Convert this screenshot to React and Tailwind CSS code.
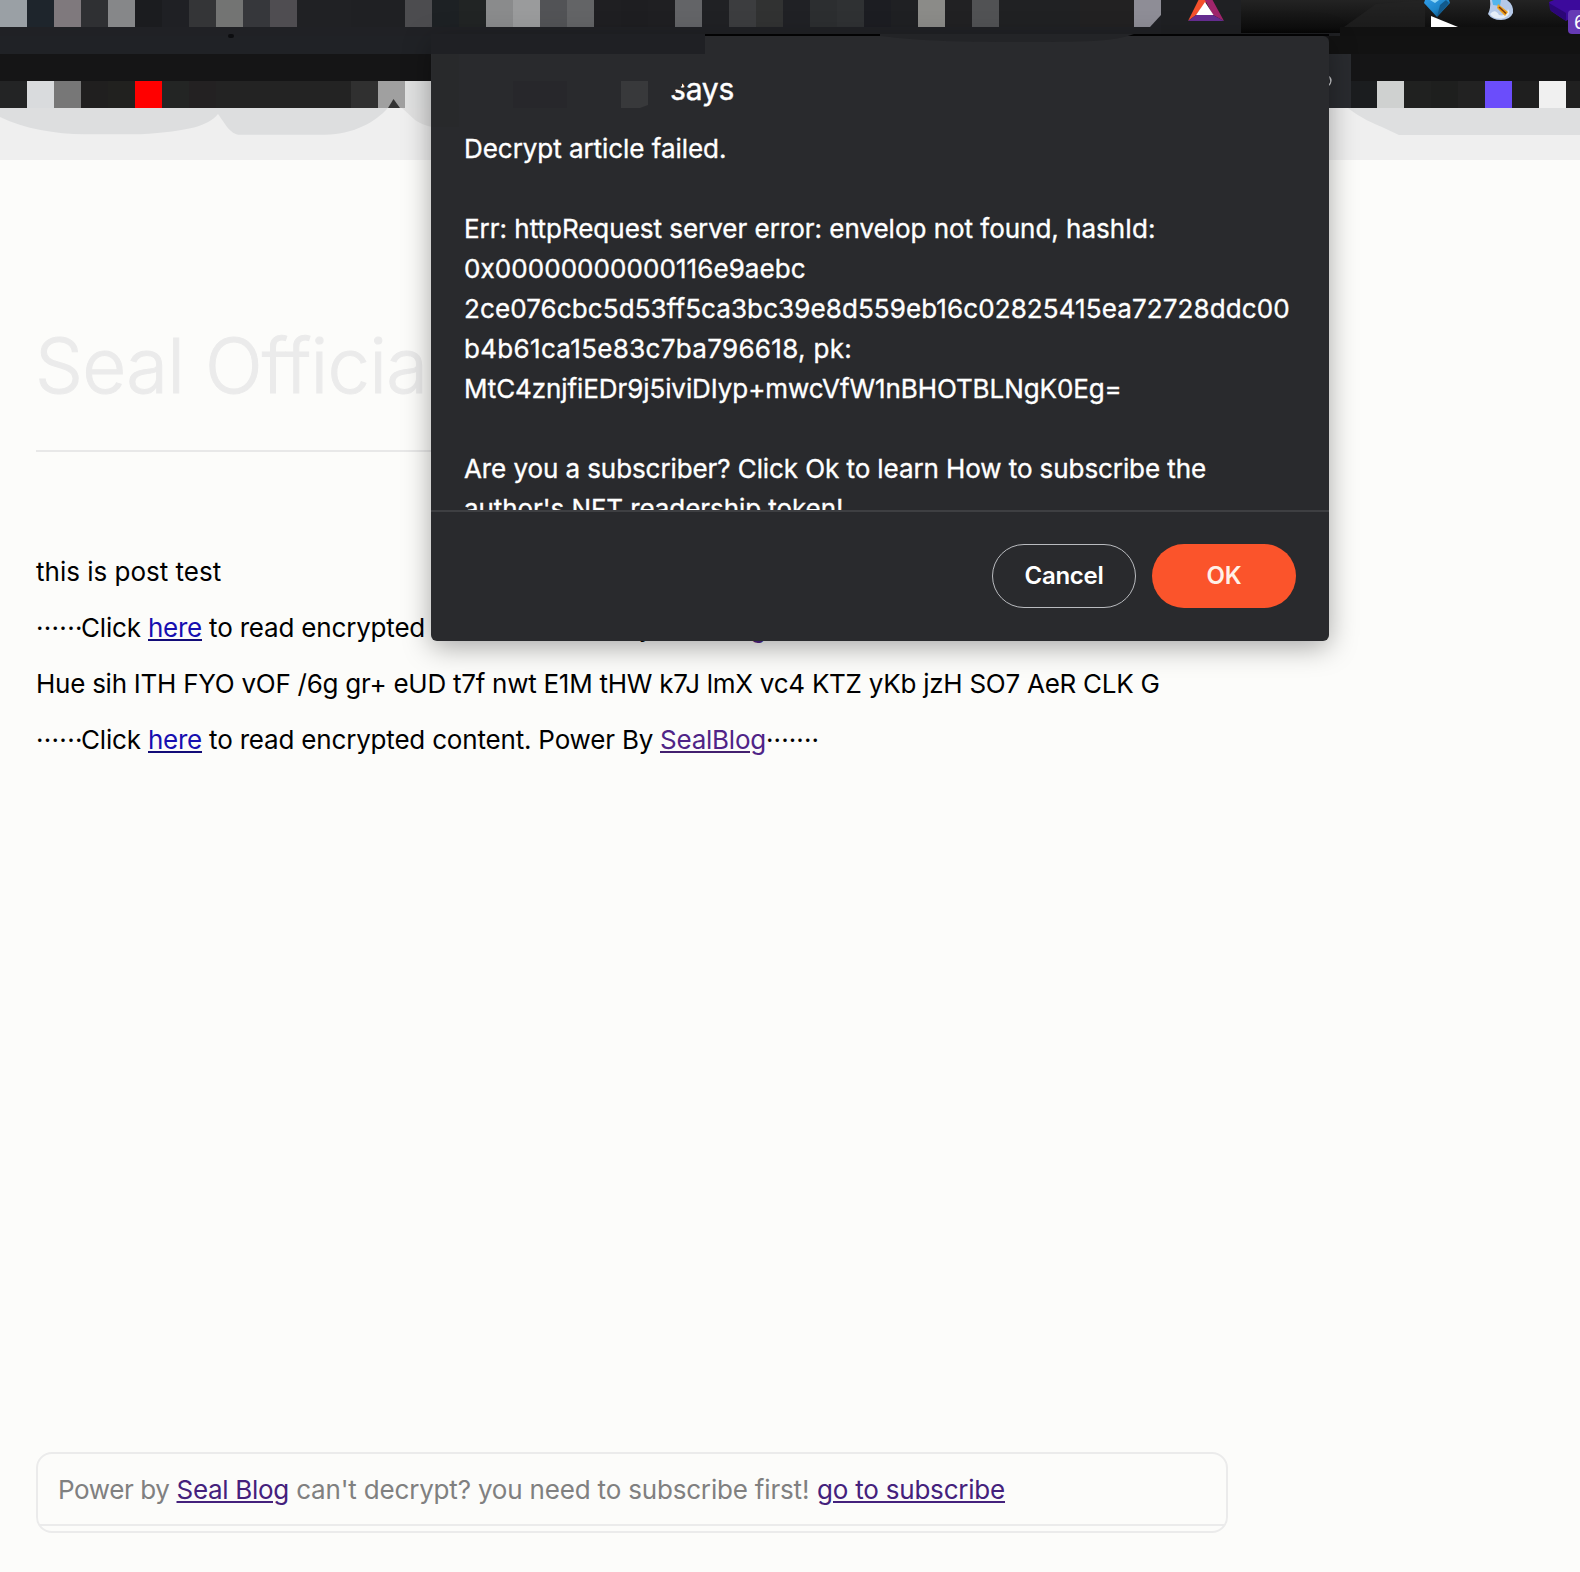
const TOP_CELLS = [
  "#9aa0a5", "#1e252c", "#7f797d", "#2f3033", "#868789", "#1b1c1f", "#1f2024", "#343537",
  "#737473", "#36373b", "#4f4d51", "#202124", "#202124", "#1f2023", "#1f2023", "#4c4c4f",
  "#1d2124", "#212424", "#8a8b8c", "#9a9b9c", "#525356", "#636466", "#1f1f22", "#1e1e21",
  "#1f1f22", "#636467", "#202124", "#3c3d3f", "#313232", "#202125", "#2c2e30", "#2f3133",
  "#1c1d22", "#1f2023", "#8b8b88", "#212123", "#515254", "#202123", "#202123", "#202123",
  "#222122", "#222122",
];

const LOW_CELLS_LEFT = [
  "#232425", "#d9dbdd", "#777777", "#201f1f", "#21211f", "#ff0000", "#232524", "#232122",
  "#232323", "#232323", "#232323", "#232323", "#232323", "#303030", "#a0a0a0", "#e0e1e1",
];

const LOW_CELLS_RIGHT = [
  "#1b1d1f", "#cfd1d0", "#202120", "#1e1f1e", "#222222", "#6b4dfb", "#1f1f1f", "#f0f0f0", "#202020",
];

function Cells({ colors }) {
  return colors.map((c, i) => (
    <div key={i} className="h-[27px] w-[27px] shrink-0" style={{ backgroundColor: c }} />
  ));
}

function ToolbarIcons() {
  return (
    <svg width="419" height="36" viewBox="1161 0 419 36" className="shrink-0">
      <defs>
        <linearGradient id="bar" x1="0" y1="0" x2="0" y2="1">
          <stop offset="0" stopColor="#232323" />
          <stop offset="0.85" stopColor="#0d0d0d" />
          <stop offset="1" stopColor="#060606" />
        </linearGradient>
        <linearGradient id="gem" x1="0" y1="0" x2="1" y2="1">
          <stop offset="0" stopColor="#2f9be8" />
          <stop offset="0.5" stopColor="#1d86c9" />
          <stop offset="1" stopColor="#0b3f66" />
        </linearGradient>
      </defs>
      <rect x="1161" y="0" width="419" height="36" fill="#1f2023" />
      <rect x="1241" y="0" width="339" height="33" fill="url(#bar)" />
      <path d="M1344 27 L1376 4 L1425 0 V27 Z" fill="#242424" opacity="0.6" />
      <rect x="1340" y="27" width="240" height="9" fill="#111111" />
      <path d="M1188 21 L1199 -1 H1206 L1206 2 L1196 15 Z" fill="#f4512c" />
      <path d="M1206 2 L1204 -1 H1212 L1224 21 L1213 15 Z" fill="#a0256b" />
      <path d="M1188 21 L1196 15 H1213 L1224 21 Z" fill="#662d91" />
      <path d="M1205 2 L1213.5 15 H1196 Z" fill="#ffffff" />
      <path d="M1425 0 H1449 L1450 3 L1437 17 L1424 3 Z" fill="url(#gem)" />
      <path d="M1430 0 H1439 L1435 3 Z" fill="#8fd6f6" />
      <path d="M1440 5 L1446 0 L1449 3 L1437 17 Z" fill="#125a8c" />
      <path d="M1431 16 L1458 27 H1431 Z" fill="#ffffff" />
      <path d="M1490 0 H1507 Q1514 5 1513 13 Q1510 20 1501 20 Q1492 20 1488 14 Q1491 8 1490 0 Z" fill="#b5c9e8" />
      <path d="M1492 0 H1501 L1500 6 L1493 5 Z" fill="#52b5ec" />
      <path d="M1490 14 Q1495 8 1499 15 Q1506 17 1508 9 Q1512 15 1504 18 Q1494 20 1490 14 Z" fill="#e6eef8" />
      <path d="M1498 4 L1508 12 L1505 16 L1497 8 Z" fill="#f0a21c" />
      <path d="M1499 7 L1506 13.5" stroke="#7b3a0c" strokeWidth="1.6" />
      <path d="M1549 2 L1554 0 H1580 V12 L1566 21 L1551 11 Z" fill="#3c0a9c" />
      <path d="M1549 3 L1566 13 L1566 21 L1550 10 Z" fill="#2b0677" />
    </svg>
  );
}

function BrowserChrome() {
  return (
    <header className="relative flex h-[160px] flex-col bg-[#151517]">
      <div className="flex h-[36px] bg-[#202125]">
        <div className="flex w-[1161px] overflow-hidden">
          <Cells colors={TOP_CELLS} />
          <svg width="27" height="27" viewBox="0 0 27 27" className="shrink-0">
            <path d="M0 0 H27 V15 L16 27 H0 Z" fill="#8e8d96" />
          </svg>
        </div>
        <ToolbarIcons />
      </div>
      <div className="flex h-[18px] justify-between">
        <div className="w-[705px] bg-[#202226]" />
        <div className="w-[251px] bg-[#121212]" />
      </div>
      <div className="h-[27px] bg-[#151516]" />
      <div className="flex h-[27px] justify-between">
        <div className="flex w-[432px]">
          <Cells colors={LOW_CELLS_LEFT} />
        </div>
        <div className="flex w-[230px] overflow-hidden">
          <Cells colors={LOW_CELLS_RIGHT} />
        </div>
      </div>
      <svg width="1580" height="52" viewBox="0 108 1580 52" className="block">
        <rect x="0" y="108" width="1580" height="52" fill="#efefef" />
        <path d="M0 108 V117 C25 129 55 134 85 134.3 H140 C190 131 208 126 218 114 C224 122 230 134.8 240 134.8 H325 C355 134 375 122 388 108 Z" fill="#dddedf" />
        <path d="M402 108 L415 120 Q422 125 432 127 V108 Z" fill="#e1e1e1" />
        <path d="M1348 108 C1360 118 1375 124 1382 127 L1399 135 H1580 V108 Z" fill="#dedfe0" />
      </svg>
      <svg width="14" height="9" viewBox="0 0 14 9" className="absolute left-[387px] top-[99px]">
        <path d="M1 9 L6.5 0 L13 9 Z" fill="#343434" />
      </svg>
      <div className="absolute left-[1329px] top-[54px] h-[54px] w-[22px] bg-[#292b2f]" />
      <div className="absolute left-[228px] top-[34px] h-[4px] w-[6px] rounded-full bg-[#0c0d10]" />
      <div className="absolute right-0 top-[10px] h-[24px] w-[12px] overflow-hidden rounded-l bg-[#663ab5] pl-[6px] text-[19px] leading-[25px] text-white">
        6
      </div>
    </header>
  );
}

function EncryptedLine() {
  return (
    <p className="flex h-10 whitespace-pre leading-10">
      <span className="w-[45px] tracking-[0.3px]">······</span>
      <span className="w-[67px] tracking-[-0.18px]">Click </span>
      <a className="w-[54px] tracking-[-0.26px] text-[#160fb0] underline decoration-[#120c78] decoration-2 underline-offset-2">here</a>
      <span className="w-[458px] tracking-[-0.19px]"> to read encrypted content. Power By </span>
      <a className="w-[106px] tracking-[-0.23px] text-[#4f2487] underline decoration-[#43206f] decoration-2 underline-offset-2">SealBlog</a>
      <span className="tracking-[0.1px]">·······</span>
    </p>
  );
}

function Article() {
  return (
    <main className="flex flex-1 flex-col pl-[36px]">
      <h1 className="mt-[157px] -ml-px h-24 whitespace-pre text-[76px] font-light leading-[96px] tracking-[-0.75px] text-[#ebebeb] [-webkit-text-stroke:1px_#ebebeb]">Seal Officia</h1>
      <div className="mt-[37px] h-[2px] w-[1191px] bg-[#e8e8e8]" />
      <div className="mt-[100px] flex flex-col gap-4 text-[26px] text-black">
        <p className="h-10 leading-10">this is post test</p>
        <EncryptedLine />
        <p className="h-10 whitespace-pre leading-10 tracking-[-0.26px]">Hue sih ITH FYO vOF /6g gr+ eUD t7f nwt E1M tHW k7J lmX vc4 KTZ yKb jzH SO7 AeR CLK G</p>
        <EncryptedLine />
      </div>
    </main>
  );
}

function Footer() {
  return (
    <footer className="mb-[39px] ml-[36px] h-[81px] w-[1192px] rounded-[16px] border-2 border-[#ebebeb] pt-4">
      <p className="flex h-10 whitespace-pre pl-[20px] text-[26px] leading-10 text-[#808080]">
        <span className="w-[118.5px] tracking-[-0.4px]">Power by </span>
        <a className="w-[112.5px] tracking-[-0.295px] text-[#44217c] underline decoration-2 underline-offset-2">Seal Blog</a>
        <span className="w-[528px] tracking-[-0.18px]"> can't decrypt? you need to subscribe first! </span>
        <a className="tracking-[-0.211px] text-[#44217c] underline decoration-2 underline-offset-2">go to subscribe</a>
      </p>
      <div className="mx-[2px] mt-[14px] h-[2px] bg-[#ebebeb]" />
    </footer>
  );
}

function Dialog() {
  return (
    <section className="absolute left-[431px] top-[36px] flex h-[605px] w-[898px] flex-col rounded-[6px] bg-[#292a2d] shadow-[0_6px_28px_rgba(0,0,0,0.34)]">
      <h2 className="mt-[33px] h-10 pl-[239px] text-[30px] font-normal leading-10 tracking-[-0.2px] text-white [-webkit-text-stroke:0.4px_#fff]">says</h2>
      <div className="mt-5 h-[381px] overflow-hidden whitespace-pre pl-[33px] text-[26px] leading-10 text-white [-webkit-text-stroke:0.35px_#fff]">
        <p className="h-10 tracking-[-0.05px]">Decrypt article failed.</p>
        <p className="mt-10 h-10 tracking-[-0.02px]">Err: httpRequest server error: envelop not found, hashId:</p>
        <p className="h-10 tracking-[0.07px]">0x00000000000116e9aebc</p>
        <p className="h-10 tracking-[0.1px]">2ce076cbc5d53ff5ca3bc39e8d559eb16c02825415ea72728ddc00</p>
        <p className="h-10 tracking-[0.32px]">b4b61ca15e83c7ba796618, pk:</p>
        <p className="h-10 tracking-[-0.09px]">MtC4znjfiEDr9j5iviDIyp+mwcVfW1nBHOTBLNgK0Eg=</p>
        <p className="mt-10 h-10 tracking-[-0.085px]">Are you a subscriber? Click Ok to learn How to subscribe the</p>
        <p className="h-10 tracking-[-0.07px]">author's NFT readership token!</p>
      </div>
      <div className="h-[2px] bg-[#3e3f42]" />
      <div className="flex justify-end gap-4 pr-[33px] pt-8">
        <button className="h-16 w-36 rounded-full border border-[#b9bbbf] text-2xl font-semibold tracking-[-0.27px] text-white">Cancel</button>
        <button className="h-16 w-36 rounded-full bg-[#fb542b] text-2xl font-semibold tracking-[-0.16px] text-[#fff1e8]">OK</button>
      </div>
      <svg width="898" height="96" viewBox="431 34 898 96" className="absolute left-0 top-[-2px]">
        <rect x="431" y="34" width="274" height="20" fill="#1f2024" />
        <rect x="705" y="34" width="624" height="2" fill="#030304" />
        <path d="M880 34 H1134 C1115 42 1080 42 1010 42 C940 42 905 39 880 36 Z" fill="#232427" />
        <rect x="432" y="54" width="27" height="73" fill="#28292b" />
        <rect x="513" y="81" width="54" height="27" fill="#27272b" />
        <path d="M621 81 H648 V105 L640 108 H621 Z" fill="#38393b" />
        <path d="M668 81 H682 V86 L675 90 L676 92 L668 95 Z" fill="#292a2d" />
      </svg>
      <svg width="4" height="14" viewBox="0 0 4 14" className="absolute left-[898px] top-[39px]">
        <path d="M0 1 Q3 3 2.6 6 Q2 10 0 11 V9 Q1.2 8 1.2 6 Z" fill="#a9aaac" />
      </svg>
    </section>
  );
}

export default function App() {
  return (
    <div className="relative flex h-[1572px] w-[1580px] flex-col overflow-hidden bg-[#fcfcfa] font-[Inter,sans-serif]">
      <BrowserChrome />
      <Article />
      <Footer />
      <Dialog />
    </div>
  );
}
